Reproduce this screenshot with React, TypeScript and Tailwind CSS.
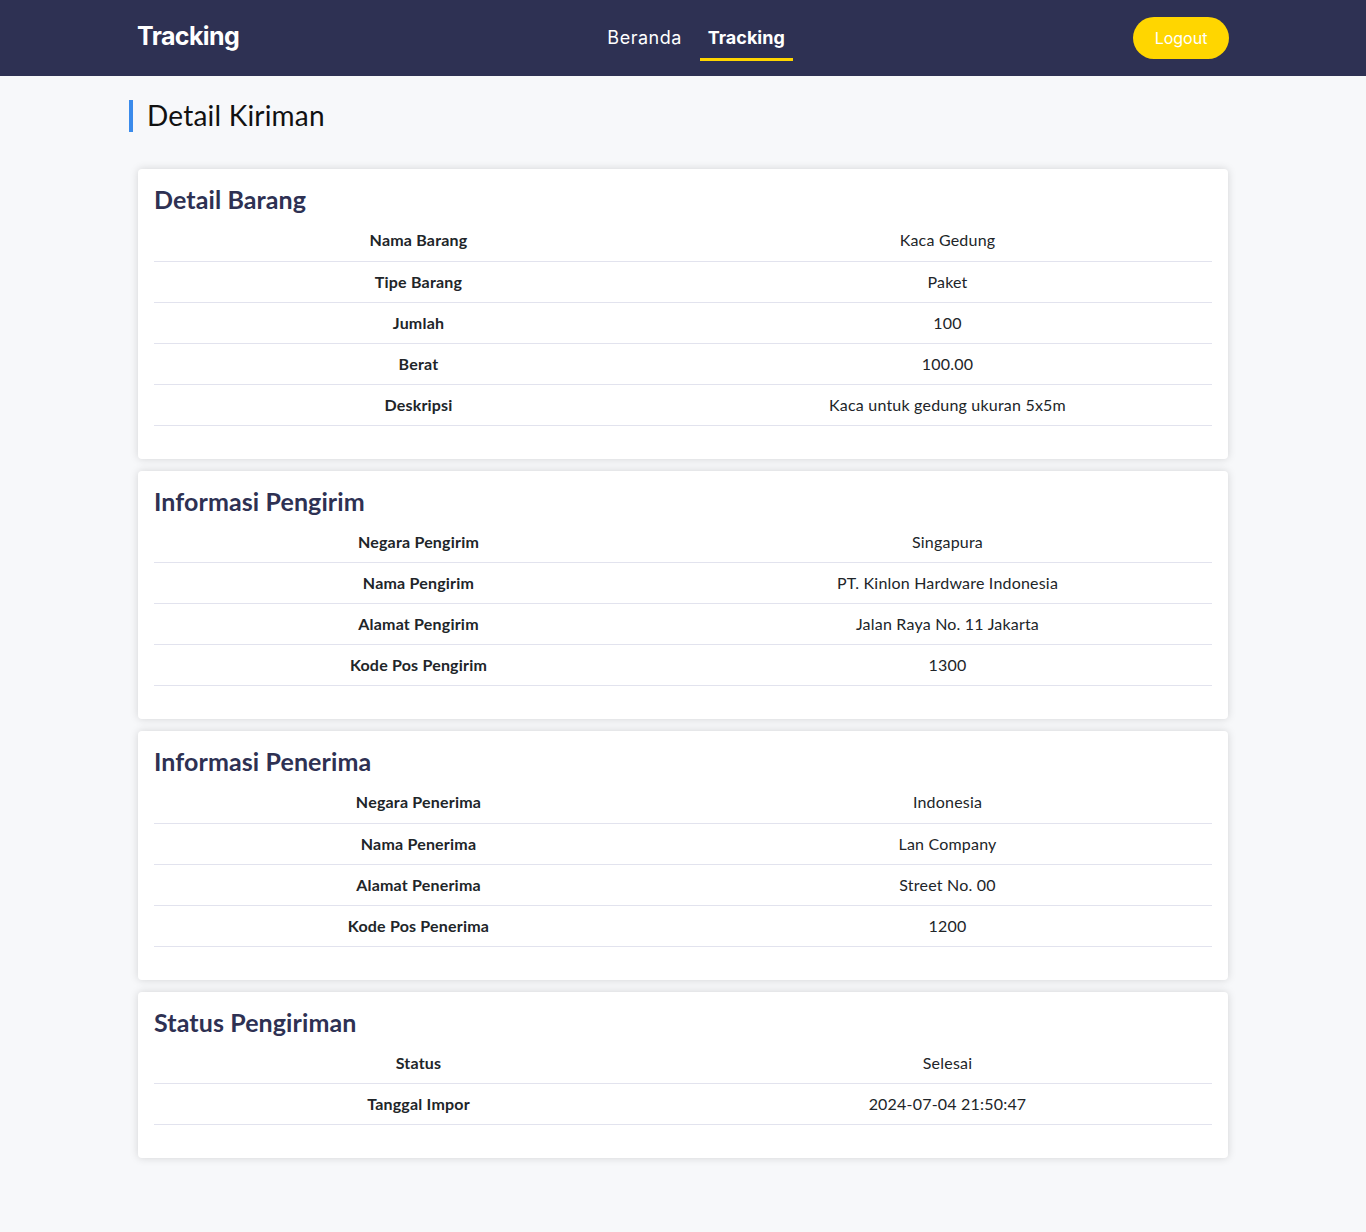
import React from "react";

const sections: { title: string; rows: [string, string][] }[] = [
  {
    title: "Detail Barang",
    rows: [
      ["Nama Barang", "Kaca Gedung"],
      ["Tipe Barang", "Paket"],
      ["Jumlah", "100"],
      ["Berat", "100.00"],
      ["Deskripsi", "Kaca untuk gedung ukuran 5x5m"],
    ],
  },
  {
    title: "Informasi Pengirim",
    rows: [
      ["Negara Pengirim", "Singapura"],
      ["Nama Pengirim", "PT. Kinlon Hardware Indonesia"],
      ["Alamat Pengirim", "Jalan Raya No. 11 Jakarta"],
      ["Kode Pos Pengirim", "1300"],
    ],
  },
  {
    title: "Informasi Penerima",
    rows: [
      ["Negara Penerima", "Indonesia"],
      ["Nama Penerima", "Lan Company"],
      ["Alamat Penerima", "Street No. 00"],
      ["Kode Pos Penerima", "1200"],
    ],
  },
  {
    title: "Status Pengiriman",
    rows: [
      ["Status", "Selesai"],
      ["Tanggal Impor", "2024-07-04 21:50:47"],
    ],
  },
];

export default function App() {
  return (
    <div className="min-h-[1232px] bg-[#f7f8fa] font-['Lato',sans-serif] text-[#212529]">
      <header className="h-[76px] bg-[#2e3153]">
        <div className="mx-auto flex h-full w-[1092px] items-center justify-between">
          <div className="-mt-[2px] font-['Inter',sans-serif] text-[25px] font-bold tracking-[-0.6px] text-white">
            Tracking
          </div>
          <nav className="ml-[20px] -mt-[2px] flex items-center gap-[10px] font-['Inter',sans-serif] text-[18px] text-white">
            <a className="px-2 py-[10px] tracking-[0.5px]">Beranda</a>
            <a className="border-b-[3px] border-[#ffd500] px-2 pb-[7px] pt-[10px] font-bold">Tracking</a>
          </nav>
          <button className="h-[42px] w-[96px] rounded-full bg-[#ffd600] font-['Inter',sans-serif] text-[16px] text-white">
            Logout
          </button>
        </div>
      </header>

      <main className="mx-auto w-[1092px] pt-[24px] pb-[72px]">
        <div className="-ml-2 flex h-[32px] items-center border-l-[4px] border-[#3b8beb] pl-[14px] text-[28px] leading-none tracking-[0.2px] text-[#111]">
          <span className="-mt-[2px]">Detail Kiriman</span>
        </div>

        <div className="mt-[37px] flex flex-col gap-[12px] px-px">
          {sections.map((s) => (
            <section
              key={s.title}
              className="rounded-[4px] bg-white px-4 pt-4 pb-[33px] shadow-[0_0_9px_rgba(0,0,0,0.15)]"
            >
              <h3 className="mb-[7px] text-[25px] font-bold leading-[28px] tracking-[0.1px] text-[#2e3153]">
                {s.title}
              </h3>
              <table className="w-full border-collapse text-[16px] tracking-[0.2px]">
                <tbody>
                  {s.rows.map(([k, v]) => (
                    <tr key={k} className="h-[41px] border-b border-[#e2e3ee]">
                      <td className="w-1/2 text-center font-bold">{k}</td>
                      <td className="w-1/2 text-center">{v}</td>
                    </tr>
                  ))}
                </tbody>
              </table>
            </section>
          ))}
        </div>
      </main>
    </div>
  );
}
